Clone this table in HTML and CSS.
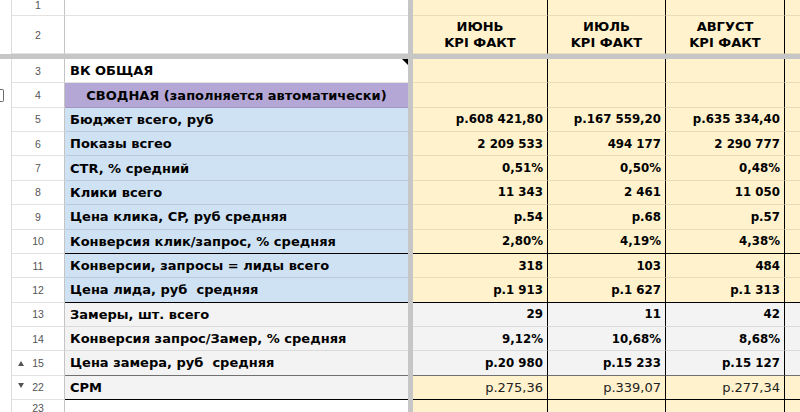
FILE: index.html
```html
<!DOCTYPE html>
<html lang="ru">
<head>
<meta charset="utf-8">
<link rel="stylesheet" href="styles.css">
</head>
<body>
<div class="sheet">
  <div class="row r1">
    <div class="gut"></div><div class="num num-top">1</div><div class="lab white"></div><div class="frz"></div>
    <div class="val"></div><div class="val"></div><div class="val"></div><div class="val extra"></div>
  </div>
  <div class="row r2">
    <div class="gut"></div><div class="num">2</div><div class="lab white"></div><div class="frz"></div>
    <div class="val head">ИЮНЬ<br>KPI ФАКТ</div><div class="val head">ИЮЛЬ<br>KPI ФАКТ</div><div class="val head">АВГУСТ<br>KPI ФАКТ</div><div class="val extra"></div>
  </div>
  <div class="freeze-row"></div>
  <div class="row">
    <div class="gut"></div><div class="num">3</div><div class="lab white note">ВК ОБЩАЯ<span class="note-mark"></span></div><div class="frz"></div>
    <div class="val"></div><div class="val"></div><div class="val"></div><div class="val extra"></div>
  </div>
  <div class="row">
    <div class="gut"><span class="group-mark"></span></div><div class="num">4</div><div class="lab purple center">СВОДНАЯ (заполняется автоматически)</div><div class="frz"></div>
    <div class="val"></div><div class="val"></div><div class="val"></div><div class="val extra"></div>
  </div>
  <div class="row">
    <div class="gut"></div><div class="num">5</div><div class="lab blue">Бюджет всего, руб</div><div class="frz"></div>
    <div class="val">р.608 421,80</div><div class="val">р.167 559,20</div><div class="val">р.635 334,40</div><div class="val extra"></div>
  </div>
  <div class="row">
    <div class="gut"></div><div class="num">6</div><div class="lab blue">Показы всгео</div><div class="frz"></div>
    <div class="val">2 209 533</div><div class="val">494 177</div><div class="val">2 290 777</div><div class="val extra"></div>
  </div>
  <div class="row">
    <div class="gut"></div><div class="num">7</div><div class="lab blue">CTR, % средний</div><div class="frz"></div>
    <div class="val">0,51%</div><div class="val">0,50%</div><div class="val">0,48%</div><div class="val extra"></div>
  </div>
  <div class="row">
    <div class="gut"></div><div class="num">8</div><div class="lab blue">Клики всего</div><div class="frz"></div>
    <div class="val">11 343</div><div class="val">2 461</div><div class="val">11 050</div><div class="val extra"></div>
  </div>
  <div class="row">
    <div class="gut"></div><div class="num">9</div><div class="lab blue">Цена клика, CP, руб средняя</div><div class="frz"></div>
    <div class="val">р.54</div><div class="val">р.68</div><div class="val">р.57</div><div class="val extra"></div>
  </div>
  <div class="row line-black">
    <div class="gut"></div><div class="num">10</div><div class="lab blue">Конверсия клик/запрос, % средняя</div><div class="frz"></div>
    <div class="val">2,80%</div><div class="val">4,19%</div><div class="val">4,38%</div><div class="val extra"></div>
  </div>
  <div class="row">
    <div class="gut"></div><div class="num">11</div><div class="lab blue">Конверсии, запросы = лиды всего</div><div class="frz"></div>
    <div class="val">318</div><div class="val">103</div><div class="val">484</div><div class="val extra"></div>
  </div>
  <div class="row line-black">
    <div class="gut"></div><div class="num">12</div><div class="lab blue">Цена лида, руб&nbsp; средняя</div><div class="frz"></div>
    <div class="val">р.1 913</div><div class="val">р.1 627</div><div class="val">р.1 313</div><div class="val extra"></div>
  </div>
  <div class="row grey-row">
    <div class="gut"></div><div class="num">13</div><div class="lab grey">Замеры, шт. всего</div><div class="frz"></div>
    <div class="val">29</div><div class="val">11</div><div class="val">42</div><div class="val extra"></div>
  </div>
  <div class="row grey-row">
    <div class="gut"></div><div class="num">14</div><div class="lab grey">Конверсия запрос/Замер, % средняя</div><div class="frz"></div>
    <div class="val">9,12%</div><div class="val">10,68%</div><div class="val">8,68%</div><div class="val extra"></div>
  </div>
  <div class="row grey-row line-dark">
    <div class="gut"></div><div class="num"><span class="tri tri-up"></span>15</div><div class="lab grey">Цена замера, руб&nbsp; средняя</div><div class="frz"></div>
    <div class="val">р.20 980</div><div class="val">р.15 233</div><div class="val">р.15 127</div><div class="val extra"></div>
  </div>
  <div class="row line-black">
    <div class="gut"></div><div class="num"><span class="tri tri-down"></span>22</div><div class="lab grey">CPM</div><div class="frz"></div>
    <div class="val plain">р.275,36</div><div class="val plain">р.339,07</div><div class="val plain">р.277,34</div><div class="val extra"></div>
  </div>
  <div class="row r23">
    <div class="gut"></div><div class="num num-top">23</div><div class="lab white"></div><div class="frz"></div>
    <div class="val"></div><div class="val"></div><div class="val"></div><div class="val extra"></div>
  </div>
</div>
</body>
</html>
```

FILE: styles.css
```css
* { box-sizing: border-box; }
html, body { margin: 0; padding: 0; background: #fff; }
body { width: 800px; height: 412px; overflow: hidden; }

.sheet {
  font-family: "DejaVu Sans", "Noto Sans", sans-serif;
  font-weight: bold;
  font-size: 13px;
  color: #000;
}

.row {
  display: grid;
  grid-template-columns: 12px 53px 343px 5px 135px 118px 119px 15px;
  height: 24.36px;
}
.r1 { height: 16px; }
.r2 { height: 38px; }
.r23 { height: 12px; }

.freeze-row { height: 5px; background: #c6c6c6; }

.gut {
  border-right: 1px solid #dadce0;
  background: #fff;
  display: flex;
  align-items: center;
}
.group-mark {
  display: block;
  width: 4px;
  height: 13px;
  border: 1px solid #6b6b6b;
  border-left: none;
  border-radius: 0 2px 2px 0;
}

.num {
  position: relative;
  border-right: 1px solid #c4c4c4;
  border-bottom: 1px solid #e2e2e2;
  font-family: "Liberation Sans", Arial, sans-serif;
  font-weight: normal;
  font-size: 10.5px;
  color: #555;
  display: flex;
  align-items: center;
  justify-content: center;
}
.num-top { align-items: flex-start; line-height: 9px; }
.r1 .num-top { align-items: flex-end; padding-bottom: 5px; }
.r23 .num-top { padding-top: 4px; }

.tri {
  position: absolute;
  left: 6px;
  width: 0;
  height: 0;
  border-left: 3.5px solid transparent;
  border-right: 3.5px solid transparent;
}
.tri-up { border-bottom: 5px solid #555; top: 10px; }
.tri-down { border-top: 5px solid #555; top: 7px; }

.lab {
  position: relative;
  border-bottom: 1px solid #e2e2e2;
  padding-left: 5px;
  display: flex;
  align-items: center;
  white-space: nowrap;
}
.white { background: #fff; }
.blue { background: #cfe2f3; border-bottom-color: #b9cbdb; }
.purple { background: #b4a7d6; border-bottom-color: #a296c0; }
.grey { background: #f3f3f3; border-bottom-color: #dadada; }
.center { justify-content: center; padding-left: 0; }

.note-mark {
  position: absolute;
  top: 0;
  right: 0;
  width: 0;
  height: 0;
  border-top: 6px solid #000;
  border-left: 6px solid transparent;
}

.frz { background: #c6c6c6; }

.val {
  background: #fff2cc;
  border-right: 1px solid #000;
  border-bottom: 1px solid #eadcb4;
  display: flex;
  align-items: center;
  justify-content: flex-end;
  padding-right: 4px;
  white-space: nowrap;
  font-size: 11.8px;
}
.val.extra { border-right: none; }
.head {
  justify-content: center;
  padding-right: 0;
  text-align: center;
  line-height: 16px;
  font-size: 13px;
}
.plain { font-weight: normal; color: #222; font-size: 13px; }

.grey-row .val { background: #f3f3f3; border-bottom-color: #dadada; }

.line-black .lab, .line-black .val { border-bottom-color: #000; }
.line-dark .lab, .line-dark .val { border-bottom-color: #707070; }
```
